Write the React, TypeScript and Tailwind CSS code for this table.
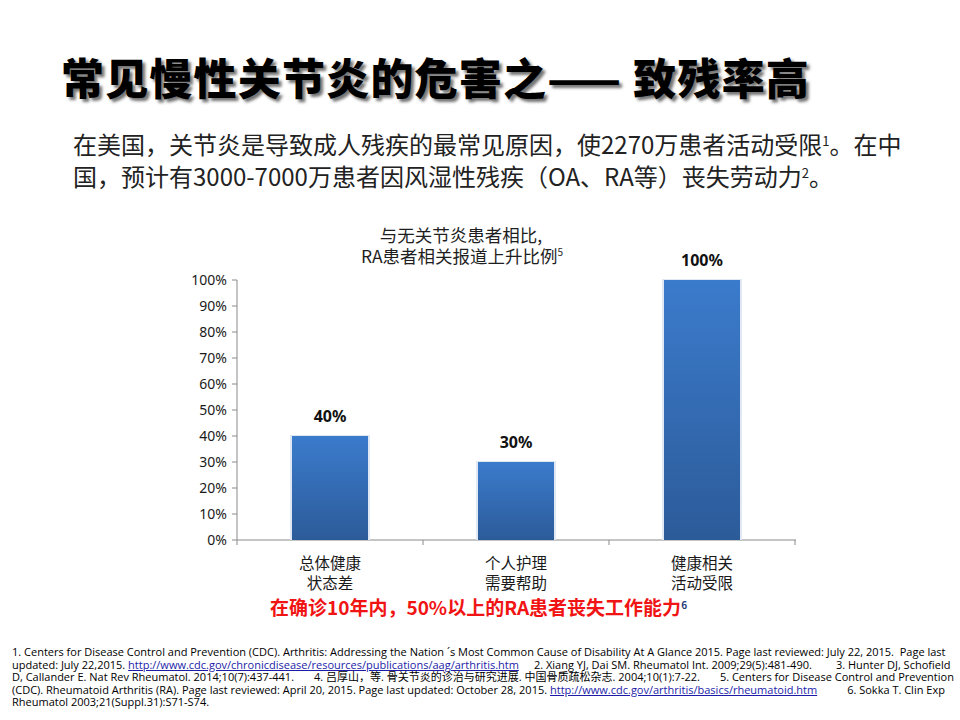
import React from 'react';

type Bar = { label: [string, string]; value: number; x: number };

const bars: Bar[] = [
  { label: ['总体健康', '状态差'], value: 40, x: 292 },
  { label: ['个人护理', '需要帮助'], value: 30, x: 478 },
  { label: ['健康相关', '活动受限'], value: 100, x: 664 },
];

const ticks = [0, 10, 20, 30, 40, 50, 60, 70, 80, 90, 100];

// 0% sits at y=540, 100% at y=280 (page coordinates)
const yOf = (v: number) => 540 - v * 2.6;

const Chart: React.FC = () => (
  <svg width={960} height={404} viewBox="0 192 960 404" className="block">
    <defs>
      <linearGradient id="barFill" x1="0" y1="0" x2="0" y2="1">
        <stop offset="0" stopColor="#3b7bcc" />
        <stop offset="1" stopColor="#2c5b99" />
      </linearGradient>
    </defs>

    <g fontFamily="'Noto Sans CJK SC', sans-serif" fontSize={17.5} fill="#1f1f1f" textAnchor="middle">
      <text x={461} y={242}>与无关节炎患者相比,</text>
      <text x={462} y={263}>
        RA患者相关报道上升比例<tspan fontSize={10} dy={-7}>5</tspan>
      </text>
    </g>

    {/* axes */}
    <line x1={237} y1={280} x2={237} y2={540} stroke="#8a8a8a" strokeWidth={1} />
    <line x1={237} y1={540} x2={796} y2={540} stroke="#8a8a8a" strokeWidth={1} />
    {ticks.map((t) => (
      <line key={t} x1={232} y1={yOf(t)} x2={237} y2={yOf(t)} stroke="#8a8a8a" strokeWidth={1} />
    ))}
    {[237, 423, 609, 795].map((x) => (
      <line key={x} x1={x} y1={540} x2={x} y2={545} stroke="#8a8a8a" strokeWidth={1} />
    ))}

    <g fontFamily="'Noto Sans', sans-serif" fontSize={14} fill="#1a1a1a" textAnchor="end">
      {ticks.map((t) => (
        <text key={t} x={227} y={yOf(t) + 5}>
          {t}%
        </text>
      ))}
    </g>

    {bars.map((b) => (
      <g key={b.x}>
        <rect x={b.x - 2} y={yOf(b.value) - 1} width={80} height={b.value * 2.6 + 1} fill="#dfe8f3" />
        <rect x={b.x} y={yOf(b.value)} width={76} height={b.value * 2.6} fill="url(#barFill)" />
        <text
          x={b.x + 38}
          y={yOf(b.value) - 14}
          textAnchor="middle"
          fontFamily="'Noto Sans', sans-serif"
          fontWeight={700}
          fontSize={16}
          fill="#111"
        >
          {b.value}%
        </text>
        <g fontFamily="'Noto Sans CJK SC', sans-serif" fontSize={15.5} fill="#1a1a1a" textAnchor="middle">
          <text x={b.x + 38} y={569}>
            {b.label[0]}
          </text>
          <text x={b.x + 38} y={589}>
            {b.label[1]}
          </text>
        </g>
      </g>
    ))}
  </svg>
);

const linkCls = 'text-[#1c1ca8] underline';

export default function App() {
  return (
    <div className="w-[960px] h-[720px] bg-white overflow-hidden font-['Noto_Sans_CJK_SC',sans-serif] text-[#1a1a1a]">
      <h1 className="pl-[61px] pt-[50px] text-[43px] leading-[52px] font-black tracking-[1.2px] text-black whitespace-nowrap [text-shadow:3px_3px_3px_rgba(0,0,0,0.55)]">
        常见慢性关节炎的危害之—— 致残率高
      </h1>

      <p className="mt-[26px] pl-[73px] text-[24px] leading-[32px] whitespace-nowrap text-[#222]">
        在美国，关节炎是导致成人残疾的最常见原因，使2270万患者活动受限<sup className="text-[13px] top-[-8px]">1</sup>。在中
        <br />
        国，预计有3000-7000万患者因风湿性残疾（OA、RA等）丧失劳动力<sup className="text-[13px] top-[-8px]">2</sup>。
      </p>

      <Chart />

      <p className="mt-[-1px] pl-[270px] text-[19px] leading-[24px] font-bold text-[#f01414] whitespace-nowrap">
        在确诊10年内，50%以上的RA患者丧失工作能力<sup className="text-[10px] top-[-6px] text-[#1f3a78]">6</sup>
      </p>

      <div className="mt-[27px] pl-[12px] font-['Open_Sans','Noto_Sans_CJK_SC',sans-serif] text-[11px] leading-[12.5px] text-black whitespace-nowrap">
        <div>
          1. Centers for Disease Control and Prevention (CDC). Arthritis: Addressing the Nation ´s Most Common Cause of Disability At A Glance 2015. Page last reviewed: July 22, 2015.&nbsp; Page last
        </div>
        <div>
          updated: July 22,2015.{' '}
          <span className={linkCls}>http://www.cdc.gov/chronicdisease/resources/publications/aag/arthritis.htm</span>
          <span className="ml-[15px]">2. Xiang YJ, Dai SM. Rheumatol Int. 2009;29(5):481-490.</span>
          <span className="ml-[24px]">3. Hunter DJ, Schofield</span>
        </div>
        <div>
          D, Callander E. Nat Rev Rheumatol. 2014;10(7):437-441.
          <span className="ml-[20px]">4. 吕厚山，等. 骨关节炎的诊治与研究进展. 中国骨质疏松杂志. 2004;10(1):7-22.</span>
          <span className="ml-[20px]">5. Centers for Disease Control and Prevention</span>
        </div>
        <div>
          (CDC). Rheumatoid Arthritis (RA). Page last reviewed: April 20, 2015. Page last updated: October 28, 2015.{' '}
          <span className={linkCls}>http://www.cdc.gov/arthritis/basics/rheumatoid.htm</span>
          <span className="ml-[30px]">6. Sokka T. Clin Exp</span>
        </div>
        <div>Rheumatol 2003;21(Suppl.31):S71-S74.</div>
      </div>
    </div>
  );
}
